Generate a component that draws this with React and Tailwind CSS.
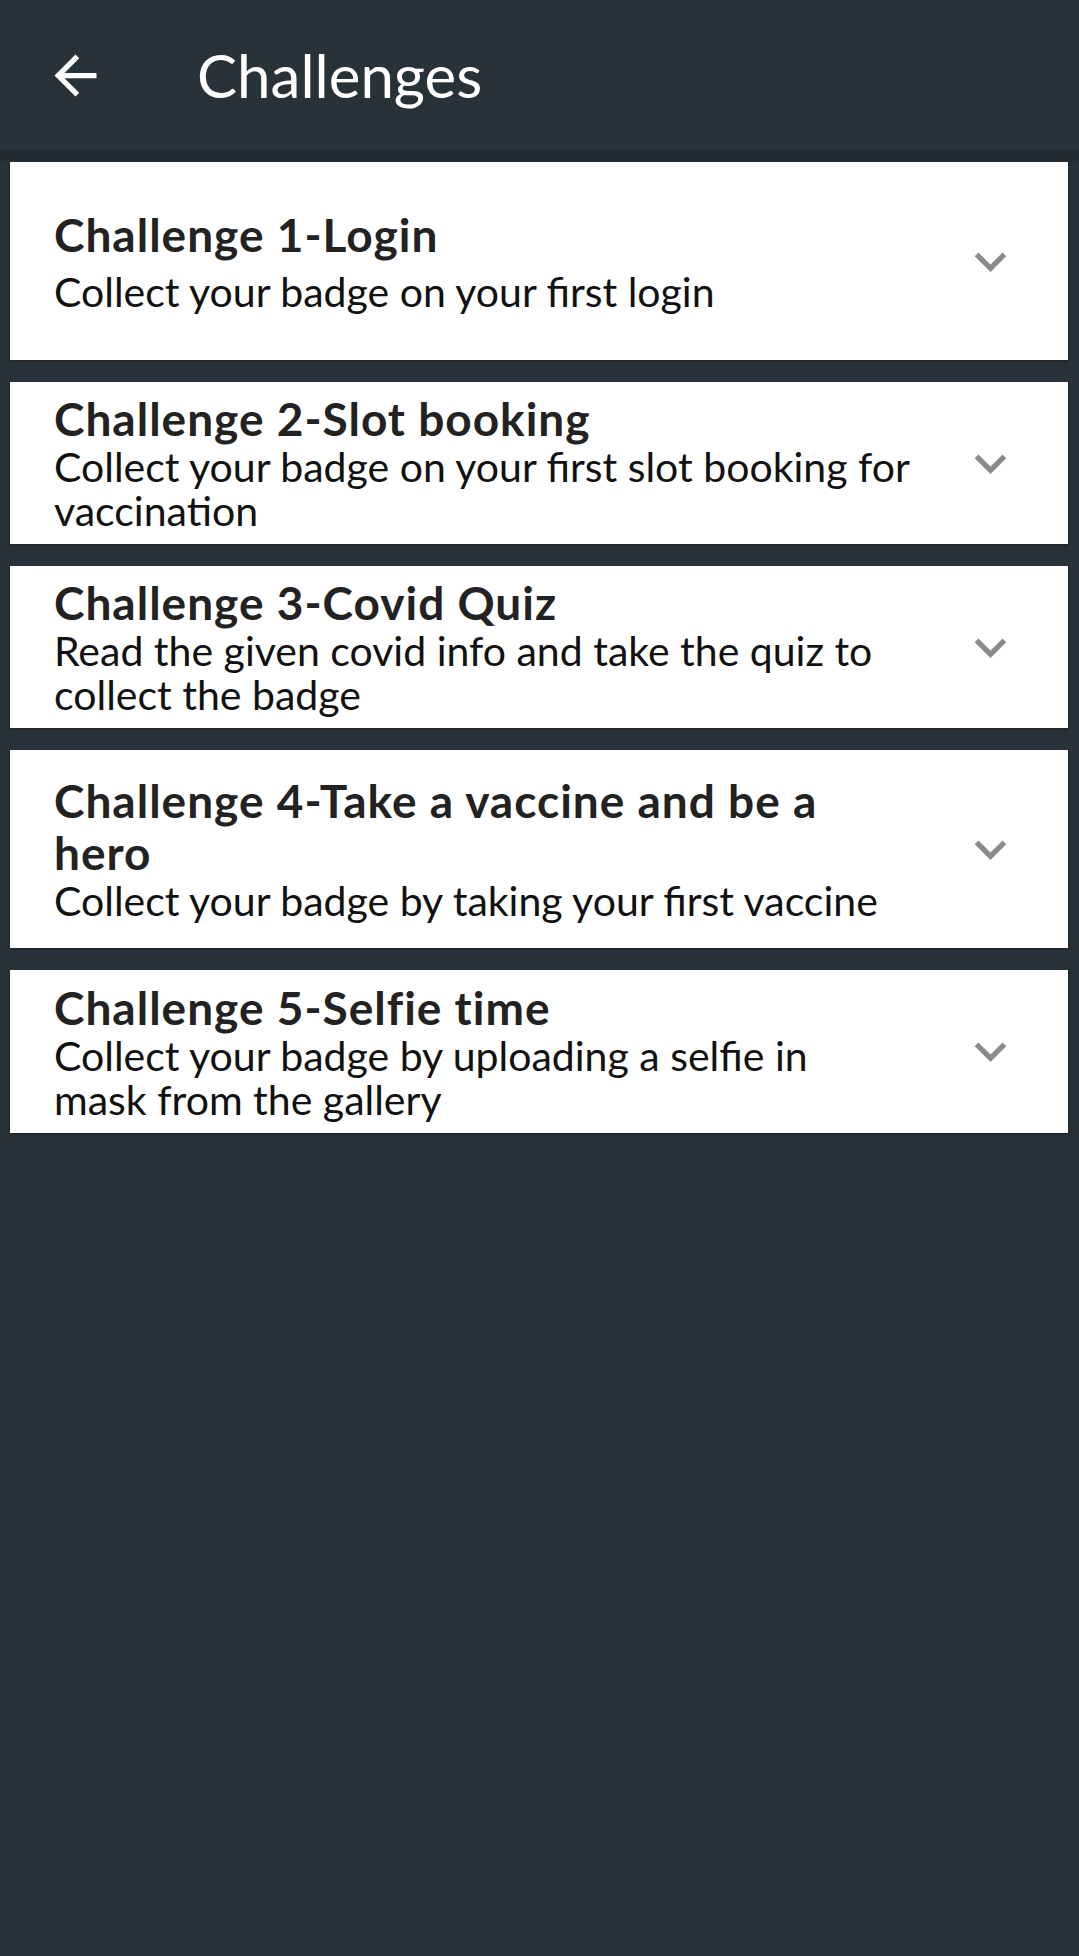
import React from "react";

const cards = [
  { h: "h-[198px]", title: ["Challenge 1-Login"], sub: ["Collect your badge on your first login"], gap: "mt-[9px]" },
  { h: "h-[162px]", title: ["Challenge 2-Slot booking"], sub: ["Collect your badge on your first slot booking for", "vaccination"], gap: "" },
  { h: "h-[162px]", title: ["Challenge 3-Covid Quiz"], sub: ["Read the given covid info and take the quiz to", "collect the badge"], gap: "" },
  { h: "h-[198px]", title: ["Challenge 4-Take a vaccine and be a", "hero"], sub: ["Collect your badge by taking your first vaccine"], gap: "" },
  { h: "h-[163px]", title: ["Challenge 5-Selfie time"], sub: ["Collect your badge by uploading a selfie in", "mask from the gallery"], gap: "" },
];

function Chevron() {
  return (
    <svg viewBox="0 0 24 24" className="w-[63px] h-[63px] shrink-0" fill="#8a8a8a">
      <path d="M16.59 8.59L12 13.17 7.41 8.59 6 10l6 6 6-6z" />
    </svg>
  );
}

export default function App() {
  return (
    <div className="min-h-[1956px] w-full bg-[#263238]" style={{ fontFamily: "Lato, 'Open Sans', sans-serif" }}>
      <div className="h-[150px] bg-[#273239] flex items-center">
        <svg viewBox="0 0 24 24" className="w-[63px] h-[63px] ml-[44px] shrink-0" fill="#ffffff">
          <path d="M20 11H7.83l5.59-5.59L12 4l-8 8 8 8 1.41-1.41L7.83 13H20v-2z" />
        </svg>
        <div className="ml-[90px] text-white text-[60px] leading-none font-normal">Challenges</div>
      </div>
      <div className="h-[11px] bg-[#222b31]"></div>
      <div className="px-[10px] pr-[11px] pt-[1px] flex flex-col gap-[22px]">
        {cards.map((c, i) => (
          <div key={i} className={`${c.h} bg-white flex items-center pl-[44px] pr-[46px] shadow-[0_1px_2px_rgba(0,0,0,0.35)]`}>
            <div className="flex-1 min-w-0">
              {c.title.map((t, j) => (
                <div key={j} className="whitespace-nowrap text-[46px] leading-[52px] tracking-[1px] font-bold text-[#222222]">{t}</div>
              ))}
              <div className={c.gap}>
                {c.sub.map((t, j) => (
                  <div key={j} className="whitespace-nowrap text-[41px] leading-[44px] font-normal text-[#111111]">{t}</div>
                ))}
              </div>
            </div>
            <Chevron />
          </div>
        ))}
      </div>
    </div>
  );
}
